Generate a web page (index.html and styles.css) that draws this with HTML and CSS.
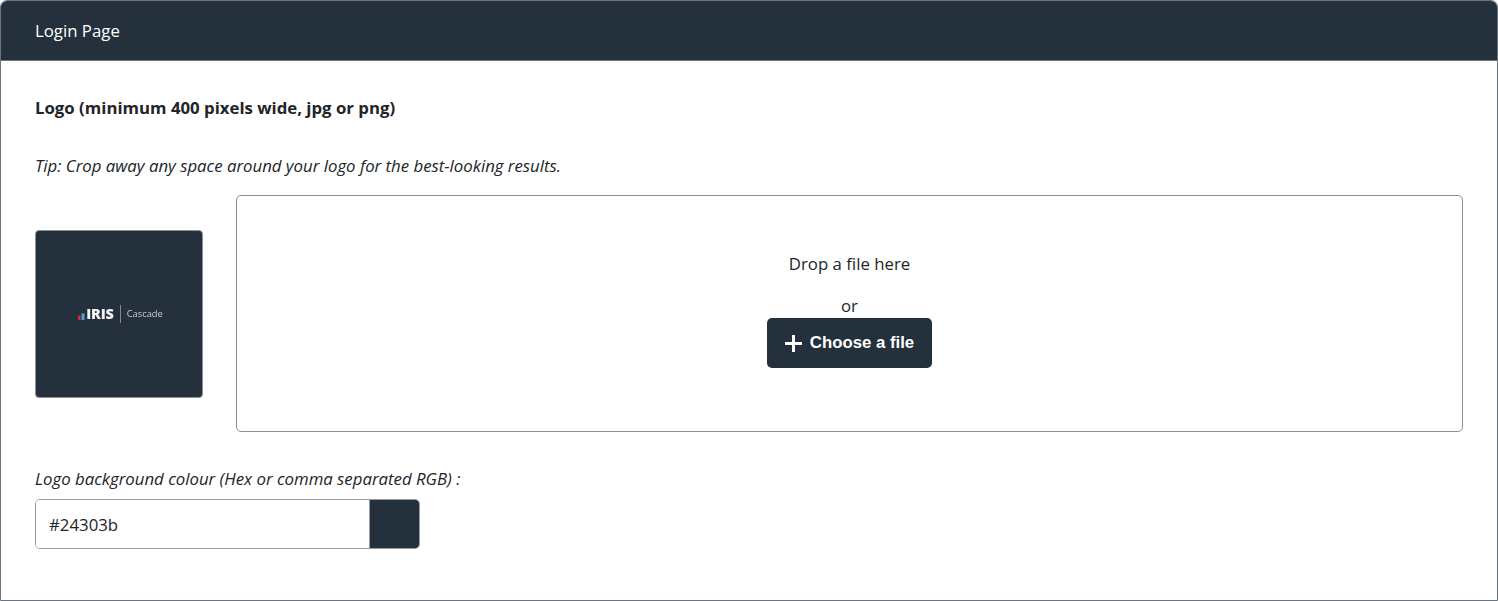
FILE: index.html
```html
<!DOCTYPE html>
<html lang="en">
<head>
<meta charset="utf-8">
<title>Login Page</title>
<link rel="stylesheet" href="styles.css">
</head>
<body>
<section class="card">
  <header class="card-header">Login Page</header>
  <div class="card-body">
    <h2 class="title">Logo (minimum 400 pixels wide, jpg or png)</h2>
    <p class="tip">Tip: Crop away any space around your logo for the best-looking results.</p>
    <div class="upload-row">
      <div class="preview-wrap">
        <div class="preview">
          <div class="brand">
            <svg class="bars" width="7" height="7" viewBox="0 0 7 7" aria-hidden="true">
              <rect x="0" y="2.500" width="2.500" height="4.500" fill="#e0243f"/>
              <rect x="3.500" y="0.500" width="3" height="6.500" fill="#4aa3df"/>
            </svg>
            <span class="brand-name">IRIS</span>
            <span class="brand-rule"></span>
            <span class="brand-product">Cascade</span>
          </div>
        </div>
      </div>
      <div class="dropzone">
        <div class="drop-text">Drop a file here</div>
        <div class="drop-or">or</div>
        <button class="choose" type="button">
          <svg width="17" height="17" viewBox="0 0 17 17" aria-hidden="true"><path d="M8.500 0V17M0 8.500H17" stroke="#fff" stroke-width="3" fill="none"/></svg>
          <span>Choose a file</span>
        </button>
      </div>
    </div>
    <label class="colour-label" for="colour">Logo background colour (Hex or comma separated RGB) :</label>
    <div class="colour-field">
      <input id="colour" class="colour-input" type="text" value="#24303b">
      <span class="swatch"></span>
    </div>
  </div>
</section>
</body>
</html>
```
FILE: styles.css
```css
* { box-sizing: border-box; }
html, body { margin: 0; padding: 0; }
body {
  width: 1498px;
  height: 601px;
  overflow: hidden;
  background: #fff;
  color: #212529;
  font-family: "Open Sans", sans-serif;
  font-size: 16.800px;
  line-height: 24px;
}
.card {
  height: 601px;
  border: 1px solid #6c757d;
  border-radius: 7px 7px 0 0;
  overflow: hidden;
  background: #fff;
}
.card-header {
  height: 60px;
  padding: 18px 34px;
  background: #24303b;
  color: #fff;
  border-bottom: 1px solid #6c757d;
}
.card-body { padding: 35px 34px 0; }
.title {
  margin: 0;
  font-size: 16.800px;
  line-height: 24px;
  font-weight: 700;
}
.tip {
  margin: 34px 0 0;
  font-style: italic;
}
.upload-row {
  display: flex;
  gap: 33px;
  margin-top: 17px;
}
.preview-wrap {
  display: flex;
  align-items: center;
  width: 168px;
  flex: none;
}
.preview {
  display: flex;
  align-items: center;
  justify-content: center;
  width: 168px;
  height: 168px;
  padding-left: 3px;
  background: #24303b;
  border: 1px solid #8a9299;
  border-radius: 4px;
}
.brand {
  display: flex;
  align-items: center;
  filter: blur(0.4px);
}
.bars { margin: 5px 1px 0 0; }
.brand-name {
  font-weight: 800;
  font-size: 14.500px;
  line-height: 18px;
  letter-spacing: -0.2px;
  color: #f2f4f5;
}
.brand-rule {
  width: 1px;
  height: 18px;
  margin: 0 6px;
  background: #7f8890;
}
.brand-product {
  font-size: 9.300px;
  line-height: 18px;
  color: #c9cdd0;
}
.dropzone {
  display: flex;
  flex-direction: column;
  align-items: center;
  flex: 1;
  height: 237px;
  padding-top: 56px;
  border: 1px solid #8f8f8f;
  border-radius: 5px;
}
.drop-text { margin-bottom: 18px; }
.choose {
  display: flex;
  align-items: center;
  justify-content: center;
  gap: 8px;
  width: 165px;
  height: 50px;
  padding: 0;
  border: 0;
  border-radius: 5px;
  background: #24303b;
  color: #fff;
  font-family: "Liberation Sans", Arial, sans-serif;
  font-size: 16.800px;
  font-weight: 700;
}
.colour-label {
  display: block;
  margin-top: 35px;
  font-style: italic;
}
.colour-field {
  display: flex;
  width: 385px;
  height: 50px;
  margin-top: 8px;
  border: 1px solid #999;
  border-radius: 5px;
  overflow: hidden;
}
.colour-input {
  flex: 1;
  min-width: 0;
  padding: 0 13px;
  border: 0;
  outline: 0;
  font-family: "Open Sans", sans-serif;
  font-size: 16.800px;
  color: #212529;
  background: #fff;
}
.swatch {
  width: 50px;
  background: #24303b;
  border-left: 1px solid #999;
}
```
